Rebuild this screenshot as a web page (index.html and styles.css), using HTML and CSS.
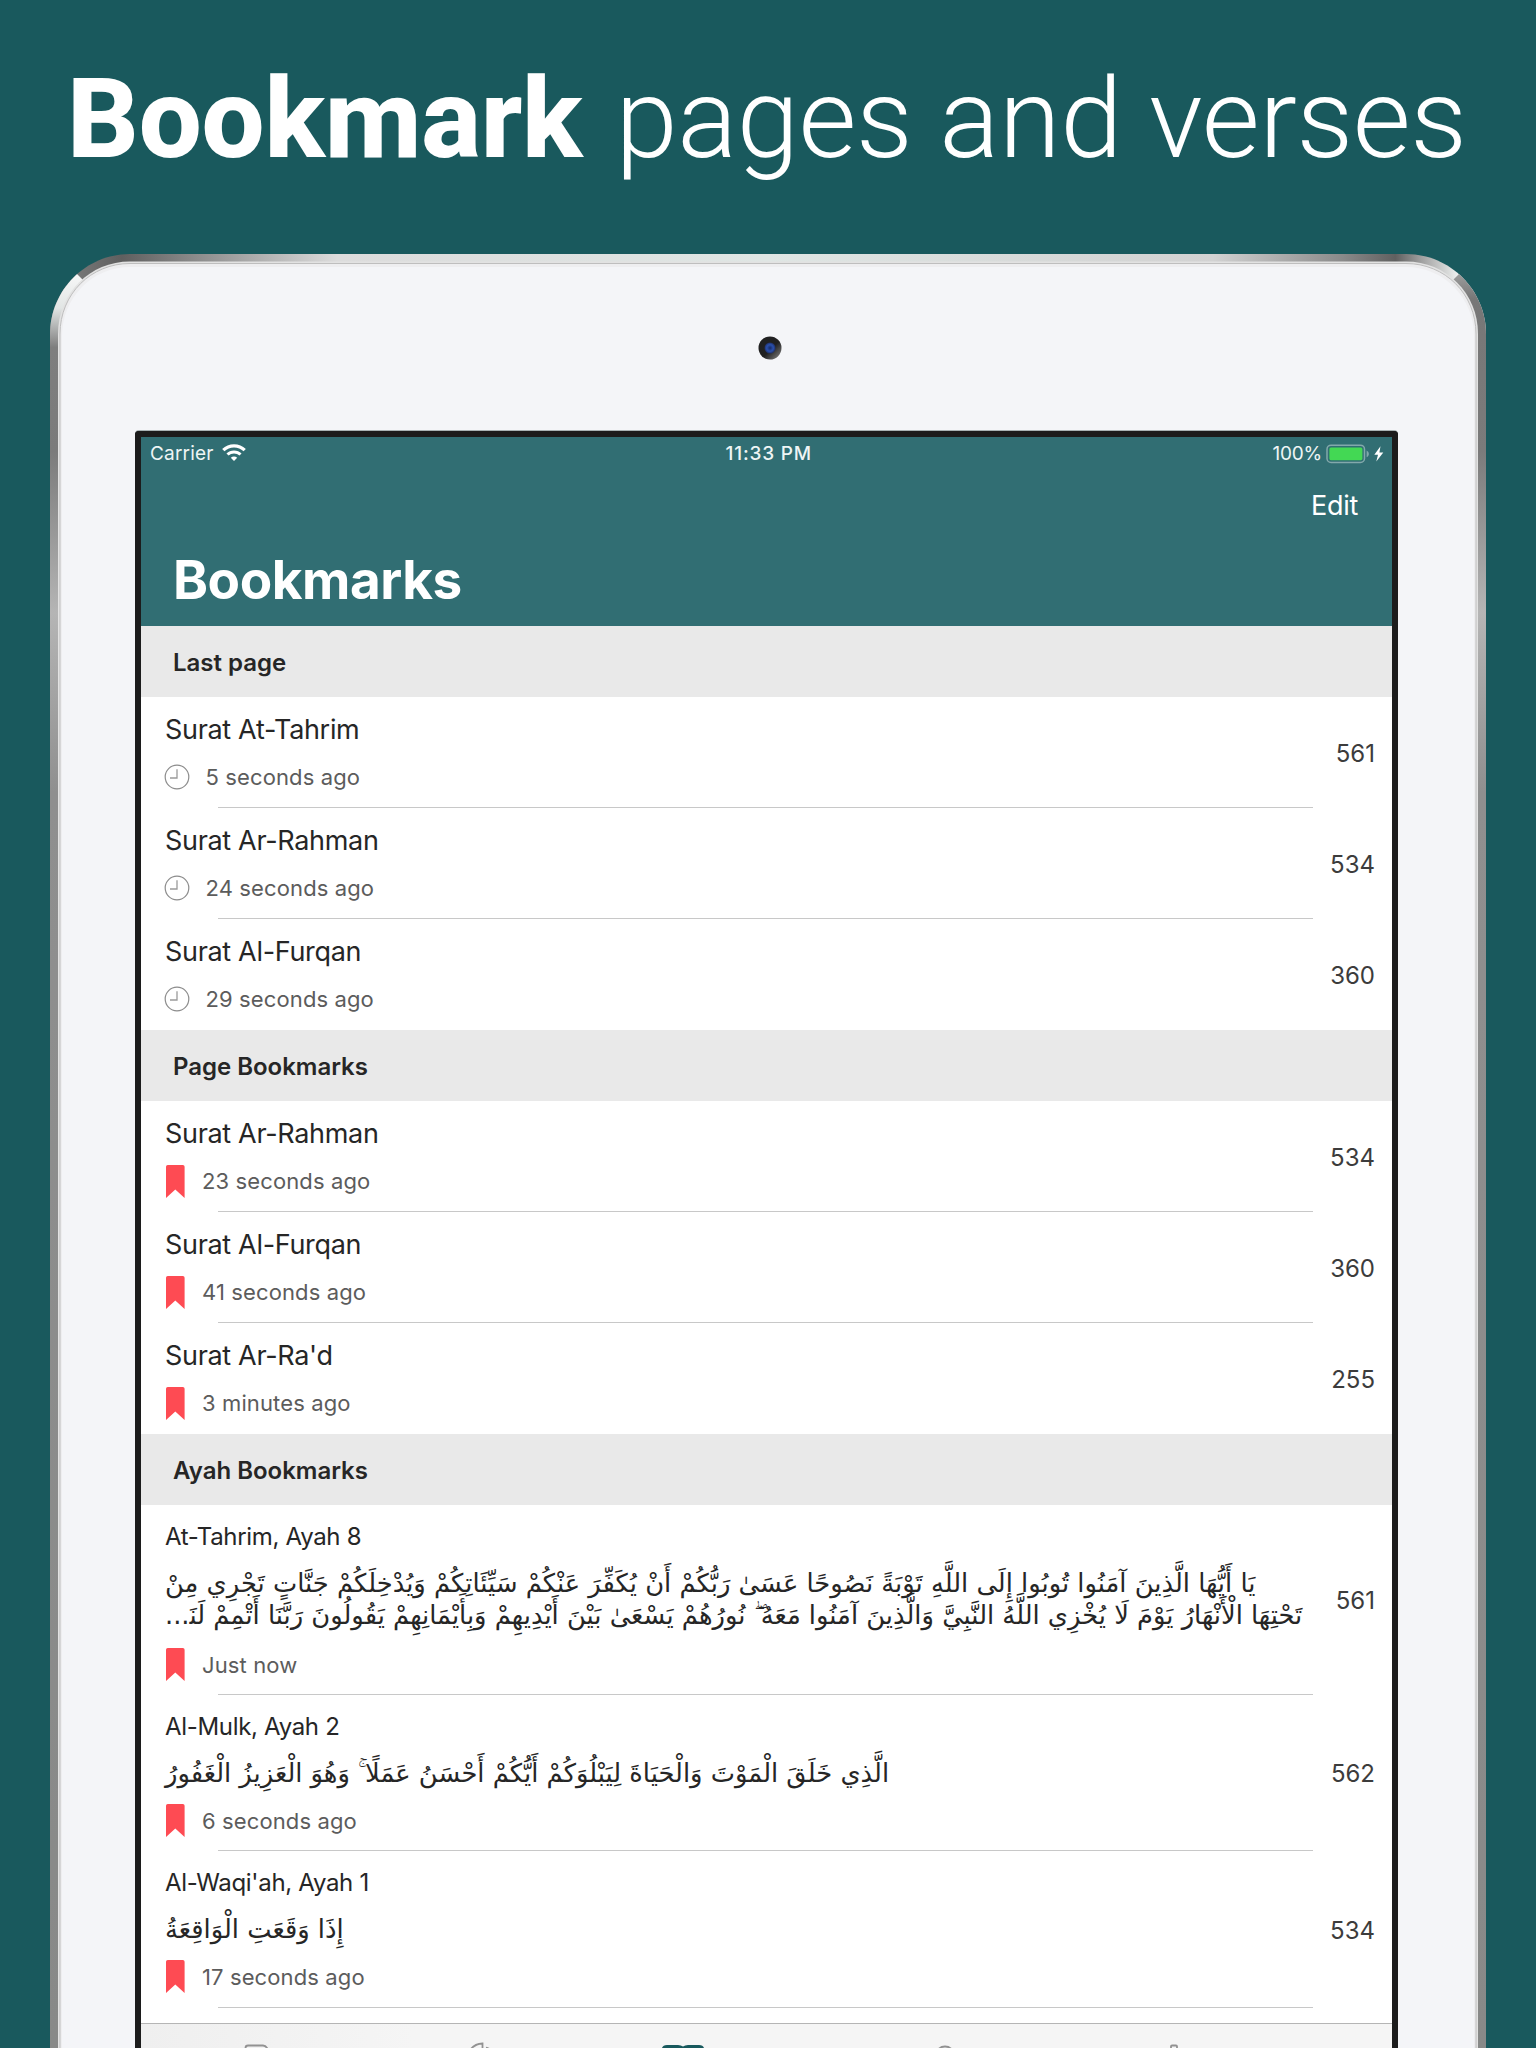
FILE: index.html
```
<!DOCTYPE html>
<html lang="en">
<head>
<meta charset="utf-8">
<title>Bookmark pages and verses</title>
<link rel="stylesheet" href="styles.css">
</head>
<body>
<svg class="defs" width="0" height="0" aria-hidden="true">
  <symbol id="clock" viewBox="0 0 26 26"><circle cx="13" cy="13" r="11.8" fill="none" stroke="#8c8c8c" stroke-width="1.2"/><path d="M13 5.2V14H6" fill="none" stroke="#9a9a9a" stroke-width="1.3"/></symbol>
  <symbol id="flag" viewBox="0 0 20 33"><path d="M1 1.8Q1 0 2.8 0H17.8Q19.6 0 19.6 1.8V33L10.3 24.6L1 33Z" fill="#fe4b53"/></symbol>
</svg>
<h1 class="headline"><b>Bookmark</b><span>pages and verses</span></h1>
<div class="device">
  <svg class="shell" viewBox="0 0 1436 1794" width="1436" height="1794" aria-hidden="true">
    <defs>
      <linearGradient id="top" x1="0" x2="1436" y1="0" y2="0" gradientUnits="userSpaceOnUse">
        <stop offset="0.018" stop-color="#777"/><stop offset="0.05" stop-color="#5f5f5f"/><stop offset="0.1" stop-color="#8a8a8a"/><stop offset="0.2" stop-color="#dcdcdc"/>
        <stop offset="0.5" stop-color="#dfe6e4"/><stop offset="0.81" stop-color="#d2d2d2"/><stop offset="0.9" stop-color="#8a8a8a"/><stop offset="0.937" stop-color="#606060"/><stop offset="0.955" stop-color="#a0a0a0"/><stop offset="0.98" stop-color="#eceeed"/>
      </linearGradient>
      <linearGradient id="left" x1="0" x2="0" y1="0" y2="1794" gradientUnits="userSpaceOnUse">
        <stop offset="0.012" stop-color="#f6f6f6"/><stop offset="0.03" stop-color="#e2e6e5"/><stop offset="0.052" stop-color="#7e7e7e"/><stop offset="0.11" stop-color="#7b7b7b"/><stop offset="0.2" stop-color="#b5b5b5"/><stop offset="0.3" stop-color="#8f8f8f"/><stop offset="1" stop-color="#888988"/>
      </linearGradient>
      <linearGradient id="right" x1="0" x2="0" y1="0" y2="1794" gradientUnits="userSpaceOnUse">
        <stop offset="0.012" stop-color="#9a9a9a"/><stop offset="0.025" stop-color="#777"/><stop offset="0.11" stop-color="#7b7b7b"/><stop offset="0.2" stop-color="#b5b5b5"/><stop offset="0.3" stop-color="#8f8f8f"/><stop offset="1" stop-color="#888988"/>
      </linearGradient>
      <clipPath id="outer"><path d="M0 1794V80C0 36 36 0 80 0H1356C1400 0 1436 36 1436 80V1794Z"/></clipPath>
    </defs>
    <g clip-path="url(#outer)">
      <rect width="1436" height="1794" fill="url(#top)"/>
      <path d="M0 -7L120 113V1794H0Z" fill="url(#left)"/>
      <path d="M1436 -7L1316 113V1794H1436Z" fill="url(#right)"/>
    </g>
    <path d="M8 1794V80C8 39 40 7.500 80 7.500H1356C1396 7.500 1428 39 1428 80V1794Z" fill="#e2e2e2"/>
    <path d="M10 1800V80C10 40 41 9.500 80 9.500H1356C1395 9.500 1426 40 1426 80V1800" fill="#eeeef0" stroke="#bebebe"/>
    <path d="M12 1794V82C12 44 42 13 80 13H1356C1394 13 1424 44 1424 82V1794Z" fill="#f4f5f8"/>
  </svg>
  <svg class="camera" viewBox="0 0 24 24" width="24" height="24" aria-hidden="true">
    <defs><linearGradient id="lens" x1="0" y1="0" x2="1" y2="1"><stop offset="0.55" stop-color="#202021"/><stop offset="1" stop-color="#8a8a8a"/></linearGradient>
    <radialGradient id="iris"><stop offset="0" stop-color="#152a66"/><stop offset="0.6" stop-color="#2b50ad"/><stop offset="1" stop-color="#1f2f66"/></radialGradient></defs>
    <circle cx="12" cy="12" r="11.500" fill="url(#lens)"/><circle cx="12" cy="12" r="5.500" fill="url(#iris)"/>
  </svg>
  <main class="screen">
    <header class="nav">
      <div class="status">
        <span class="carrier">Carrier</span>
        <svg class="wifi" viewBox="0 0 24 18" width="24" height="18"><g fill="none" stroke="#fff"><path d="M1.300 6.200C7.200 .3 16.800 .3 22.700 6.200" stroke-width="3.200"/><path d="M5.500 10.500C9 7 15 7 18.500 10.500" stroke-width="3"/></g><path d="M8.800 13.700C10.600 12 13.400 12 15.200 13.700L12 17Z" fill="#fff"/></svg>
        <span class="time">11:33 PM</span>
        <span class="percent">100%</span>
        <svg class="battery" viewBox="0 0 60 20" width="60" height="20"><rect x="1" y="1.200" width="37.500" height="17.300" rx="4" fill="none" stroke="#83a8ab" stroke-width="1.500"/><rect x="3.400" y="3.500" width="33" height="12.700" rx="1.600" fill="#43d854"/><path d="M40.600 6.500C43.600 8 43.600 11.800 40.600 13.300Z" fill="#83a8ab"/><path d="M54.500 2.200L48.300 10.700H52L50.300 17.500L57.300 8.600H53.400Z" fill="#fff"/></svg>
      </div>
      <div class="edit">Edit</div>
      <h2 class="title">Bookmarks</h2>
    </header>
    <h3 class="section">Last page</h3>
    <div class="row"><div class="info"><div class="name">Surat At-Tahrim</div><div class="meta recent"><svg width="26" height="26"><use href="#clock"/></svg>5 seconds ago</div></div><div class="page">561</div></div>
    <div class="row"><div class="info"><div class="name">Surat Ar-Rahman</div><div class="meta recent"><svg width="26" height="26"><use href="#clock"/></svg>24 seconds ago</div></div><div class="page">534</div></div>
    <div class="row last"><div class="info"><div class="name">Surat Al-Furqan</div><div class="meta recent"><svg width="26" height="26"><use href="#clock"/></svg>29 seconds ago</div></div><div class="page">360</div></div>
    <h3 class="section">Page Bookmarks</h3>
    <div class="row"><div class="info"><div class="name">Surat Ar-Rahman</div><div class="meta"><svg width="20" height="33"><use href="#flag"/></svg>23 seconds ago</div></div><div class="page">534</div></div>
    <div class="row"><div class="info"><div class="name">Surat Al-Furqan</div><div class="meta"><svg width="20" height="33"><use href="#flag"/></svg>41 seconds ago</div></div><div class="page">360</div></div>
    <div class="row last"><div class="info"><div class="name">Surat Ar-Ra'd</div><div class="meta"><svg width="20" height="33"><use href="#flag"/></svg>3 minutes ago</div></div><div class="page">255</div></div>
    <h3 class="section">Ayah Bookmarks</h3>
    <div class="row ayah long"><div class="info"><div class="name">At-Tahrim, Ayah 8</div>
      <div class="verse" lang="ar"><span dir="rtl">يَا أَيُّهَا الَّذِينَ آمَنُوا تُوبُوا إِلَى اللَّهِ تَوْبَةً نَصُوحًا عَسَىٰ رَبُّكُمْ أَنْ يُكَفِّرَ عَنْكُمْ سَيِّئَاتِكُمْ وَيُدْخِلَكُمْ جَنَّاتٍ تَجْرِي مِنْ</span><span dir="rtl">تَحْتِهَا الْأَنْهَارُ يَوْمَ لَا يُخْزِي اللَّهُ النَّبِيَّ وَالَّذِينَ آمَنُوا مَعَهُ ۖ نُورُهُمْ يَسْعَىٰ بَيْنَ أَيْدِيهِمْ وَبِأَيْمَانِهِمْ يَقُولُونَ رَبَّنَا أَتْمِمْ لَنَ&zwj;...</span></div>
      <div class="meta"><svg width="20" height="33"><use href="#flag"/></svg>Just now</div></div><div class="page">561</div></div>
    <div class="row ayah"><div class="info"><div class="name">Al-Mulk, Ayah 2</div>
      <div class="verse" lang="ar"><span dir="rtl">الَّذِي خَلَقَ الْمَوْتَ وَالْحَيَاةَ لِيَبْلُوَكُمْ أَيُّكُمْ أَحْسَنُ عَمَلًا ۚ وَهُوَ الْعَزِيزُ الْغَفُورُ</span></div>
      <div class="meta"><svg width="20" height="33"><use href="#flag"/></svg>6 seconds ago</div></div><div class="page">562</div></div>
    <div class="row ayah"><div class="info"><div class="name">Al-Waqi'ah, Ayah 1</div>
      <div class="verse" lang="ar"><span dir="rtl">إِذَا وَقَعَتِ الْوَاقِعَةُ</span></div>
      <div class="meta"><svg width="20" height="33"><use href="#flag"/></svg>17 seconds ago</div></div><div class="page">534</div></div>
    <nav class="tabs">
      <svg viewBox="0 0 1251 24" width="1251" height="24">
        <g fill="none" stroke="#929292" stroke-width="1.800"><path d="M104.500 30V24Q104.500 21.500 107 21.500H122Q124.500 21.500 126 24L128 28"/><path d="M328 28Q332 20 341.500 19.500V30M345 23.500Q349 24.500 351 28"/><path d="M1030 30V22.500Q1030 21.500 1031 21.500H1035Q1036 21.500 1036 22.500V30"/><circle cx="804" cy="32" r="9.500"/></g>
        <path d="M521 30V24Q522 21 526 21H537Q540 21 542 22.500Q544 21 547 21H558Q562 21 563 24V30Z" fill="#18595d"/>
      </svg>
    </nav>
  </main>
</div>
</body>
</html>
```
FILE: styles.css
```
* { box-sizing: border-box; margin: 0; padding: 0; }
body { width: 1536px; height: 2048px; overflow: hidden; background: #19595d; font-family: Inter, "Liberation Sans", sans-serif; color: #262626; }
.defs { position: absolute; }
.headline { display: flex; height: 254px; padding: 53px 0 0 67px; gap: 33px; color: #fff; font: 300 112px/131px Roboto, sans-serif; white-space: nowrap; }
.headline b { font-weight: 800; letter-spacing: -0.250px; }
.headline span { letter-spacing: -0.400px; }
.device { position: relative; width: 1436px; height: 1794px; margin: 0 50px; padding: 177px 0 0 85px; }
.shell { position: absolute; inset: 0; }
.camera { position: absolute; left: 707.500px; top: 81.500px; }
.screen { position: relative; width: 1263px; height: 1617px; border: 6px solid #1c1c1c; border-bottom: 0; border-radius: 4px 4px 0 0; box-shadow: 0 -1px 0 #a9b3b4; background: #fff; overflow: hidden; display: flex; flex-direction: column; }
.nav { height: 188.500px; flex: none; background: #316e73; color: #fff; }
.status { display: flex; align-items: center; height: 33px; padding: 0 6px 0 9px; font-size: 19px; color: #eef5f5; }
.carrier { width: 72px; letter-spacing: 0.2px; }
.time { flex: 1; text-align: center; padding-left: 19px; font-weight: 500; letter-spacing: 0.8px; }
.wifi { flex: none; margin-top: -2px; }
.percent { letter-spacing: -0.2px; margin-right: 4px; }
.battery { flex: none; }
.edit { height: 71px; padding: 0 34px 0 0; text-align: right; font-size: 27px; line-height: 71px; letter-spacing: -0.3px; }
.title { padding-left: 32px; font-size: 53px; line-height: 78px; font-weight: 700; letter-spacing: -0.450px; }
.section { flex: none; height: 71.500px; padding-left: 32px; background: #e9e9e9; font-size: 24px; line-height: 73px; font-weight: 600; letter-spacing: -0.020px; }
.row { position: relative; flex: none; display: flex; height: 110.850px; padding: 13.300px 17px 0 24px; }
.row:not(.last)::after { content: ""; position: absolute; left: 77px; right: 79px; bottom: 0; height: 1px; background: #c8c8c8; }
.info { flex: 1; }
.name { font-size: 27px; line-height: 40px; letter-spacing: -0.320px; }
.meta { display: flex; align-items: center; gap: 17px; height: 34px; margin-top: 10px; font-size: 22px; letter-spacing: 0.120px; color: #5c5c5c; }
.recent { gap: 15.500px; }
.recent svg { margin-left: -1px; }
.page { align-self: center; height: 40px; margin-top: -10px; font-size: 24px; line-height: 40px; color: #3c3c3c; }
.ayah { height: 156.300px; padding-top: 12px; }
.ayah.long { height: 190px; }
.ayah .name { font-size: 24px; }
.verse { padding-top: 9.500px; height: 56.500px; font: 25.750px/32.800px "DejaVu Sans", sans-serif; white-space: nowrap; }
.long .verse { height: 90.500px; }
.verse span { display: block; width: max-content; }
.ayah .meta { margin-top: 0; }
.tabs { position: absolute; left: 0; right: 0; bottom: 0; height: 25px; border-top: 1px solid #b5b5b5; background: linear-gradient(90deg, #efefef, #f5f5f5 22%); }
.tabs svg { display: block; }
```
